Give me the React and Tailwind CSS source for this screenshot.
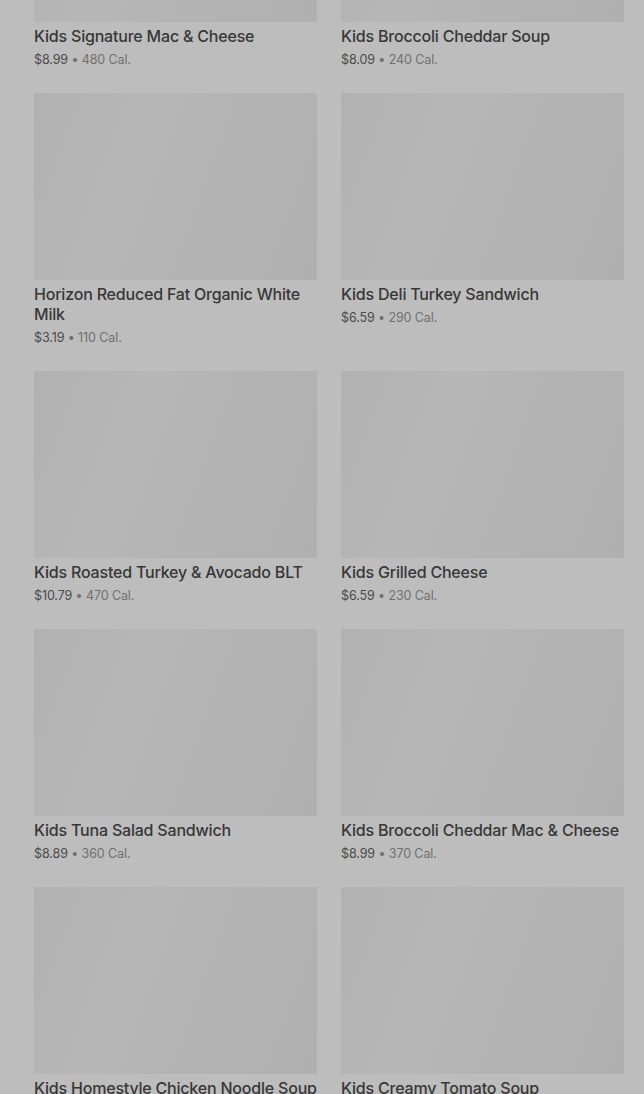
import React from 'react';

const items = [
  { name: 'Kids Signature Mac & Cheese', price: '$8.99', cal: '480 Cal.' },
  { name: 'Kids Broccoli Cheddar Soup', price: '$8.09', cal: '240 Cal.' },
  { name: 'Horizon Reduced Fat Organic White Milk', price: '$3.19', cal: '110 Cal.' },
  { name: 'Kids Deli Turkey Sandwich', price: '$6.59', cal: '290 Cal.' },
  { name: 'Kids Roasted Turkey & Avocado BLT', price: '$10.79', cal: '470 Cal.' },
  { name: 'Kids Grilled Cheese', price: '$6.59', cal: '230 Cal.' },
  { name: 'Kids Tuna Salad Sandwich', price: '$8.89', cal: '360 Cal.' },
  { name: 'Kids Broccoli Cheddar Mac & Cheese', price: '$8.99', cal: '370 Cal.' },
  { name: 'Kids Homestyle Chicken Noodle Soup', price: '$8.09', cal: '280 Cal.' },
  { name: 'Kids Creamy Tomato Soup', price: '$8.09', cal: '230 Cal.' },
];

function MenuCard({ item }) {
  return (
    <div className="flex flex-col">
      <div className="h-[187px] w-full bg-[linear-gradient(110deg,#b1b1b1_0%,#b7b7b7_35%,#b3b3b3_60%,#b0b0b0_100%)]" />
      <div className="mt-1 text-[16px] leading-5 font-medium tracking-[-0.2px] text-[#373737]">{item.name}</div>
      <div className="mt-[5px] text-[12.5px] leading-[18px] tracking-[-0.1px] text-[#4a4a4a]">
        {item.price}
        <span className="text-[#707070]">{' \u2022 '}{item.cal}</span>
      </div>
    </div>
  );
}

export default function App() {
  return (
    <div
      className="min-h-screen overflow-hidden bg-[#bdbdbd]"
      style={{ fontFamily: 'Inter, "Noto Sans", sans-serif' }}
    >
      <div className="-mt-[165px] grid grid-cols-2 gap-x-6 gap-y-6 pl-[34px] pr-5">
        {items.map((item) => (
          <MenuCard key={item.name} item={item} />
        ))}
      </div>
    </div>
  );
}
